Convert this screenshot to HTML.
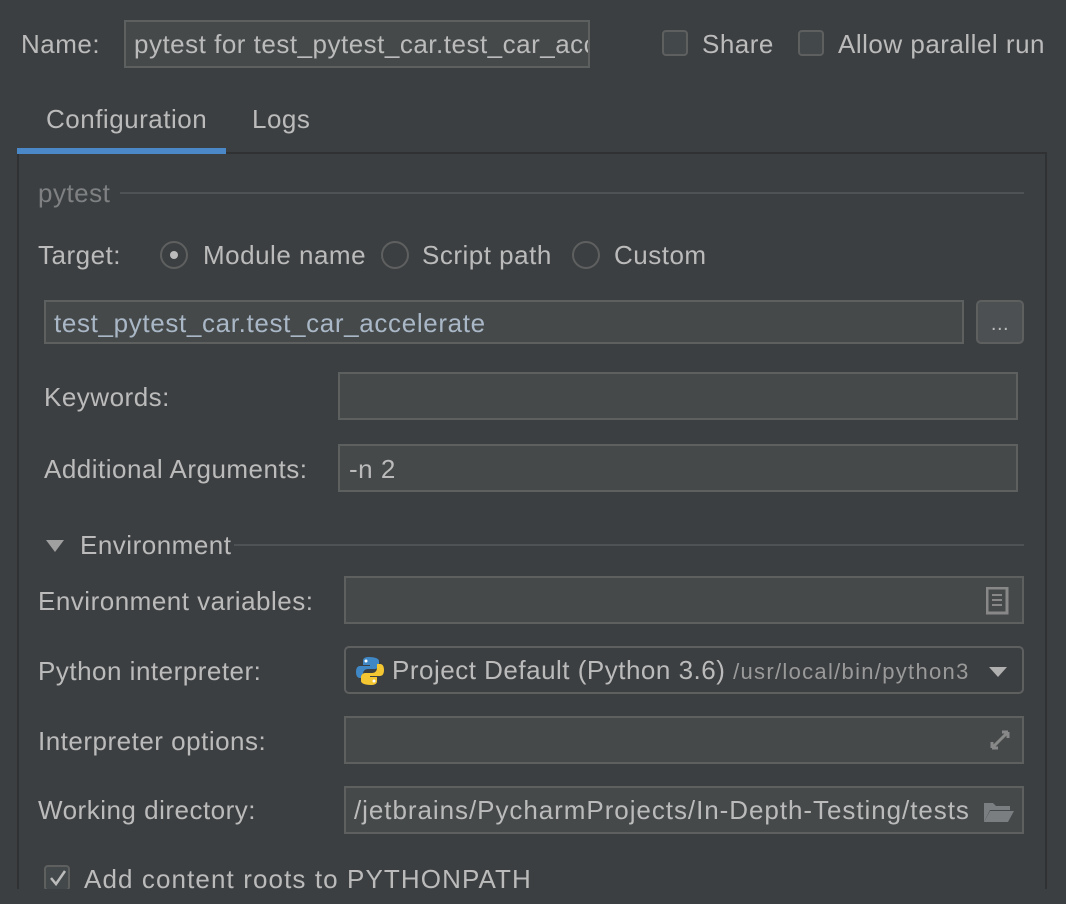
<!DOCTYPE html>
<html><head><meta charset="utf-8"><style>
body{margin:0;width:1066px;height:904px;background:#3c3f41;overflow:hidden;font-family:"Liberation Sans",sans-serif;font-size:26px;letter-spacing:0.5px;color:#bbbbbb;position:relative}
.a{position:absolute;white-space:nowrap;line-height:30px}
.f{position:absolute;background:#45494a;border:2px solid #5e6060;box-sizing:border-box}
.cb{position:absolute;width:26px;height:26px;border:2px solid #5e6060;border-radius:4px;background:#43494a;box-sizing:border-box}
.rb{position:absolute;width:28px;height:28px;border:2px solid #5e6060;border-radius:50%;box-sizing:border-box;background:#3c3f41}
.line{position:absolute;height:2px;background:#4f5254}
</style></head><body>
<div class="a" style="left:21px;top:29px">Name:</div>
<div class="f" style="left:124px;top:20px;width:466px;height:48px;overflow:hidden"><div class="a" style="left:8px;top:7px">pytest for test_pytest_car.test_car_accelerate</div></div>
<div class="cb" style="left:662px;top:30px"></div>
<div class="a" style="left:702px;top:29px">Share</div>
<div class="cb" style="left:798px;top:30px"></div>
<div class="a" style="left:838px;top:29px">Allow parallel run</div>

<div class="a" style="left:46px;top:104px">Configuration</div>
<div class="a" style="left:252px;top:104px">Logs</div>
<div style="position:absolute;left:17px;top:152px;width:1030px;height:738px;border-left:2px solid #2f3133;border-right:2px solid #2f3133;border-top:2px solid #2f3133;box-sizing:border-box"></div>
<div style="position:absolute;left:17px;top:148px;height:6px;background:#4a88c7;width:209px"></div>

<div class="a" style="left:38px;top:178px;color:#7e8082">pytest</div>
<div class="line" style="left:120px;top:192px;width:904px"></div>

<div class="a" style="left:38px;top:240px">Target:</div>
<div class="rb" style="left:160px;top:241px"></div><div style="position:absolute;left:170px;top:251px;width:8px;height:8px;border-radius:50%;background:#bbbbbb"></div>
<div class="a" style="left:203px;top:240px">Module name</div>
<div class="rb" style="left:381px;top:241px"></div>
<div class="a" style="left:422px;top:240px">Script path</div>
<div class="rb" style="left:572px;top:241px"></div>
<div class="a" style="left:614px;top:240px">Custom</div>

<div class="f" style="left:44px;top:300px;width:920px;height:44px"><div class="a" style="left:8px;top:6px;color:#a9b7c6;letter-spacing:0.65px">test_pytest_car.test_car_accelerate</div></div>
<div style="position:absolute;left:976px;top:300px;width:48px;height:44px;border:2px solid #5e6060;border-radius:5px;background:#4c5052;box-sizing:border-box;text-align:center;font-size:20px;line-height:44px">...</div>

<div class="a" style="left:44px;top:382px">Keywords:</div>
<div class="f" style="left:338px;top:372px;width:680px;height:48px"></div>
<div class="a" style="left:44px;top:454px">Additional Arguments:</div>
<div class="f" style="left:338px;top:444px;width:680px;height:48px"><div class="a" style="left:9px;top:8px">-n 2</div></div>

<svg style="position:absolute;left:44px;top:538px" width="22" height="16"><polygon points="2,2 20,2 11,14" fill="#a0a0a0"/></svg>
<div class="a" style="left:80px;top:530px">Environment</div>
<div class="line" style="left:234px;top:544px;width:790px"></div>

<div class="a" style="left:38px;top:586px">Environment variables:</div>
<div class="f" style="left:344px;top:576px;width:680px;height:48px"><svg style="position:absolute;right:12px;top:9px" width="24" height="28"><rect x="1" y="1" width="20" height="25" fill="none" stroke="#888" stroke-width="3"/><path d="M6 8h10M6 13h10M6 18h10" stroke="#888" stroke-width="2"/></svg></div>

<div class="a" style="left:38px;top:656px">Python interpreter:</div>
<div class="f" style="left:344px;top:646px;width:680px;height:48px;border-radius:5px;background:#3c3f41">
<svg style="position:absolute;left:10px;top:8px" width="28" height="30" viewBox="0 0 28 30"><path d="M13 1c-6 0-6 3-6 4v4h7v1H4c-3 0-4 3-4 6s1 6 4 6h3v-4c0-3 2-5 5-5h7c2 0 4-2 4-4V5c0-2-3-4-10-4z" fill="#3f87c5"/><path d="M15 29c6 0 6-3 6-4v-4h-7v-1h10c3 0 4-3 4-6s-1-6-4-6h-3v4c0 3-2 5-5 5H9c-2 0-4 2-4 4v4c0 2 3 4 10 4z" fill="#f4c632"/><circle cx="10" cy="5" r="1.5" fill="#fff"/><circle cx="18" cy="25" r="1.5" fill="#fff"/></svg>
<div class="a" style="left:46px;top:7px">Project Default (Python 3.6) <span style="font-size:22px;color:#9a9a9a;letter-spacing:1.3px">/usr/local/bin/python3</span></div>
<svg style="position:absolute;right:14px;top:18px" width="20" height="12"><polygon points="1,1 19,1 10,11" fill="#b0b0b0"/></svg></div>

<div class="a" style="left:38px;top:726px">Interpreter options:</div>
<div class="f" style="left:344px;top:716px;width:680px;height:48px"><svg style="position:absolute;right:8px;top:8px" width="28" height="28"><path d="M6 22L22 6M22 6h-6M22 6v6M6 22h6M6 22v-6" stroke="#888" stroke-width="3" fill="none"/></svg></div>

<div class="a" style="left:38px;top:795px">Working directory:</div>
<div class="f" style="left:344px;top:786px;width:680px;height:48px;overflow:hidden"><div class="a" style="left:8px;top:7px;letter-spacing:0.95px">/jetbrains/PycharmProjects/In-Depth-Testing/tests</div>
<div style="position:absolute;right:0;top:0;width:46px;height:44px;background:#45494a"></div>
<svg style="position:absolute;right:6px;top:12px" width="34" height="24"><path d="M2 3h9l3 3h14v4H8L2 22z" fill="#7a7e80"/><path d="M8 11h24l-6 11H2z" fill="#7a7e80"/></svg></div>

<div class="cb" style="left:44px;top:865px"></div>
<svg style="position:absolute;left:48px;top:868px" width="20" height="20"><path d="M3 10l5 6L17 3" stroke="#bbb" stroke-width="2.5" fill="none"/></svg>
<div class="a" style="left:84px;top:864px;letter-spacing:1.1px">Add content roots to PYTHONPATH</div>
<div style="position:absolute;left:0;top:889px;width:1066px;height:15px;background:#3c3f41"></div>
</body></html>
